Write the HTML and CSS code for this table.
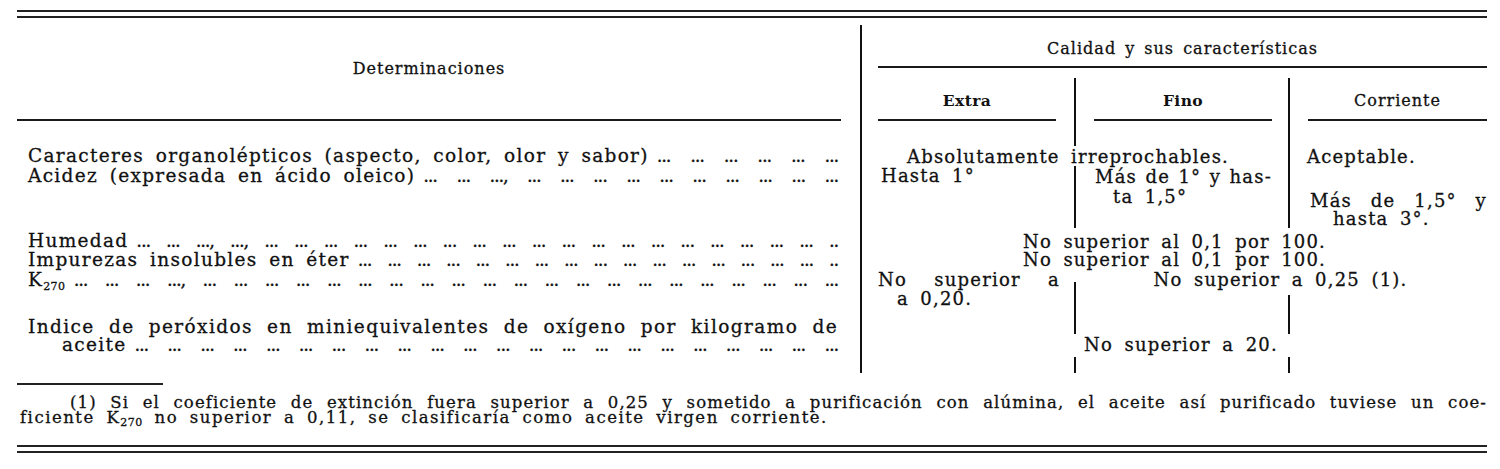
FILE: index.html
```html
<!DOCTYPE html>
<html lang="es">
<head>
<meta charset="utf-8">
<title>Determinaciones</title>
<link rel="stylesheet" href="styles.css">
</head>
<body>
<div class="page">
  <div class="rule2"></div>
  <div class="table">
    <div class="left">
      <div class="head-left"><span>Determinaciones</span></div>
      <div class="lgrid">
        <div class="ln l1"><span class="lbl">Caracteres organolépticos (aspecto, color, olor y sabor)</span><span class="dots">... ... ... ... ... ...</span></div>
        <div class="ln l2"><span class="lbl">Acidez (expresada en ácido oleico)</span><span class="dots">... ... ..., ... ... ... ... ... ... ... ... ... ...</span></div>
        <div class="l3">
          <div class="ln"><span class="lbl">Humedad</span><span class="dots">... ... ..., ..., ... ... ... ... ... ... ... ... ... ... ... ... ... ... ... ... ... ... ... ..</span></div>
          <div class="ln"><span class="lbl">Impurezas insolubles en éter</span><span class="dots">... ... ... ... ... ... ... ... ... ... ... ... ... ... ... ... ..</span></div>
        </div>
        <div class="ln l4"><span class="lbl">K<sub>270</sub></span><span class="dots">... ... ... ..., ... ... ... ... ... ... ... ... ... ... ... ... ... ... ... ... ... ... ... ... ...</span></div>
        <div class="l5">
          <div class="just">Indice de peróxidos en miniequivalentes de oxígeno por kilogramo de</div>
          <div class="ln indent"><span class="lbl">aceite</span><span class="dots">... ... ... ... ... ... ... ... ... ... ... ... ... ... ... ... ... ... ... ... ... ...</span></div>
        </div>
      </div>
    </div>
    <div class="right">
      <div class="head-top">Calidad y sus características</div>
      <div class="rgrid">
        <div class="sh c1 r1"><span class="shl bold">Extra</span></div>
        <div class="sh c2 r1 vl"><span class="shl bold">Fino</span></div>
        <div class="sh c3 r1 vl"><span class="shl last">Corriente</span></div>

        <div class="c2 r2 vl"></div>
        <div class="c3 r2 vl"></div>

        <div class="cell r3 c12 center abs">Absolutamente irreprochables.</div>
        <div class="cell r3 c3 vl acep">Aceptable.</div>

        <div class="cell r4 c1 hasta">Hasta 1°</div>
        <div class="cell r4 c2 vl fino2">
          <div class="jl">Más de 1° y has-</div>
          <div class="ind18">ta 1,5°</div>
        </div>
        <div class="cell r4 c3 vl corr2">
          <div class="jl">Más de 1,5° y</div>
          <div class="ind23">hasta 3°.</div>
        </div>

        <div class="cell r5 c123 center hum">
          <div>No superior al 0,1 por 100.</div>
          <div>No superior al 0,1 por 100.</div>
        </div>

        <div class="cell r6 c1 k1"><div class="jl">No superior a</div></div>
        <div class="cell r6 c23 center k2">No superior a 0,25 (1).</div>

        <div class="cell r7 c1 k3">a 0,20.</div>
        <div class="r7 c2 vl up6"></div>
        <div class="r7 c3 vl down7"></div>

        <div class="cell r8 c2 center p20">No superior a 20.</div>

        <div class="r9 c2 vl"></div>
        <div class="r9 c3 vl"></div>
      </div>
    </div>
  </div>
  <div class="fn-rule"></div>
  <div class="fn">
    <div class="fn1">(1) Si el coeficiente de extinción fuera superior a 0,25 y sometido a purificación con alúmina, el aceite así purificado tuviese un coe-</div>
    <div class="fn2">ficiente K<sub>270</sub> no superior a 0,11, se clasificaría como aceite virgen corriente.</div>
  </div>
  <div class="rule2 bottom"></div>
</div>
</body>
</html>
```
FILE: styles.css
```css
html, body {
  margin: 0;
  background: #fff;
}
body {
  font-family: "DejaVu Serif", "Liberation Serif", serif;
  color: #111;
  -webkit-text-stroke: 0.3px #111;
}
.page {
  width: 1470px;
  padding: 10px 0 0 17px;
}
.rule2 {
  height: 4px;
  border-top: 2px solid #222;
  border-bottom: 2px solid #222;
}
.rule2.bottom {
  margin-top: 20px;
}
.table {
  display: flex;
  gap: 19px;
}

/* left column */
.left {
  width: 824px;
  flex: none;
}
.head-left {
  height: 101px;
  border-bottom: 2px solid #1a1a1a;
  display: flex;
  align-items: center;
  justify-content: center;
  font-size: 16px;
  letter-spacing: 1px;
}
.lgrid {
  display: grid;
  grid-template-columns: minmax(0, 1fr);
  grid-template-rows: 25px 20px 62px 41px 19px 46px 23px 16px;
  padding: 0 3px 0 11px;
  font-size: 18.5px;
  line-height: 18.5px;
  letter-spacing: 1.3px;
  word-spacing: 4.5px;
}
.ln {
  display: flex;
  white-space: nowrap;
}
.lbl {
  flex: none;
}
.dots {
  flex: 1 1 auto;
  width: 0;
  min-width: 0;
  margin-left: 8px;
  white-space: nowrap;
  text-align: justify;
  text-align-last: justify;
  font-size: 18px;
  letter-spacing: -1.2px;
  word-spacing: 0;
}
.l1 { grid-row: 2; padding-top: 1.3px; }
.l2 { grid-row: 3; padding-top: 0.8px; }
.l3 { grid-row: 4; padding-top: 4.4px; line-height: 18.3px; }
.l4 { grid-row: 5; padding-top: 2px; }
.l5 { grid-row: 6 / 8; align-self: end; padding-bottom: 2.3px; }
.just {
  text-align: justify;
  text-align-last: justify;
  letter-spacing: 1.4px;
  word-spacing: 3px;
  white-space: nowrap;
}
.indent {
  padding-left: 34px;
}
sub {
  font-size: 11px;
  line-height: 0;
  vertical-align: -4px;
  letter-spacing: 0.5px;
}

/* right column */
.right {
  width: 627px;
  box-sizing: border-box;
  margin-top: 7px;
  border-left: 2px solid #111;
  flex: none;
}
.head-top {
  margin: 0 0 10px 16px;
  padding: 12px 0 5px;
  line-height: 24px;
  border-bottom: 2px solid #1a1a1a;
  text-align: center;
  font-size: 16px;
  letter-spacing: 1px;
  word-spacing: 3px;
}
.rgrid {
  display: grid;
  grid-template-columns: 212px 214px 199px;
  grid-template-rows: 43px 25px 20px 62px 41px 19px 46px 23px 16px;
  font-size: 18px;
  line-height: 18.5px;
  letter-spacing: 1.2px;
  word-spacing: 4.5px;
}
.vl {
  border-left: 2px solid #111;
}
.c1 { grid-column: 1; }
.c2 { grid-column: 2; }
.c3 { grid-column: 3; }
.c12 { grid-column: 1 / 3; }
.c23 { grid-column: 2 / 4; }
.c123 { grid-column: 1 / 4; }
.r1 { grid-row: 1; }
.r2 { grid-row: 2; }
.r3 { grid-row: 3; }
.r4 { grid-row: 4; }
.r5 { grid-row: 5; }
.r6 { grid-row: 6; }
.r7 { grid-row: 7; }
.r8 { grid-row: 8; }
.r9 { grid-row: 9; }

.sh {
  display: flex;
  min-width: 0;
}
.shl {
  flex: 1;
  height: 22px;
  padding: 12px 0 7px;
  line-height: 22px;
  border-bottom: 2px solid #1a1a1a;
  text-align: center;
  font-size: 16px;
  letter-spacing: 1px;
}
.shl.bold {
  font-weight: bold;
  font-size: 15.5px;
  letter-spacing: 0.4px;
  -webkit-text-stroke: 0;
}
.c1 .shl { margin: 0 18px 0 16px; }
.c2 .shl { margin: 0 16px 0 18px; }
.c3 .shl { margin: 0 0 0 18px; }

.center { text-align: center; }
.abs { padding: 1.5px 14px 0 0; }
.acep { padding: 1.5px 0 0 17px; }
.hasta { padding: 1px 0 0 19px; }
.fino2 { padding: 0.5px 16px 0 19px; line-height: 20.5px; }
.corr2 { padding: 26px 0 0 20px; line-height: 17.5px; }
.jl {
  text-align: justify;
  text-align-last: justify;
  word-spacing: 1px;
  white-space: nowrap;
}
.ind18 { padding-left: 18px; }
.ind23 { padding-left: 23px; }
.hum { padding-top: 4.6px; line-height: 18.3px; }
.k1 { padding: 2.2px 14px 0 16px; }
.k2 { padding-top: 2.2px; }
.k3 { padding: 1.5px 0 0 35px; }
.up6 { margin-top: -6px; }
.down7 { margin-top: 7px; }
.p20 { padding-top: 2.2px; }

/* footnote */
.fn-rule {
  width: 146px;
  height: 2px;
  margin-top: 10px;
  background: #222;
}
.fn {
  margin-top: 10px;
  font-size: 16.5px;
  line-height: 15px;
  letter-spacing: 1.5px;
  word-spacing: 5px;
}
.fn1 {
  padding-left: 53px;
  text-align: justify;
  text-align-last: justify;
  white-space: nowrap;
  letter-spacing: 1.1px;
  word-spacing: 2px;
}
.fn2 {
  padding-left: 3px;
}
.fn sub {
  font-size: 11px;
  vertical-align: -3px;
}
```
